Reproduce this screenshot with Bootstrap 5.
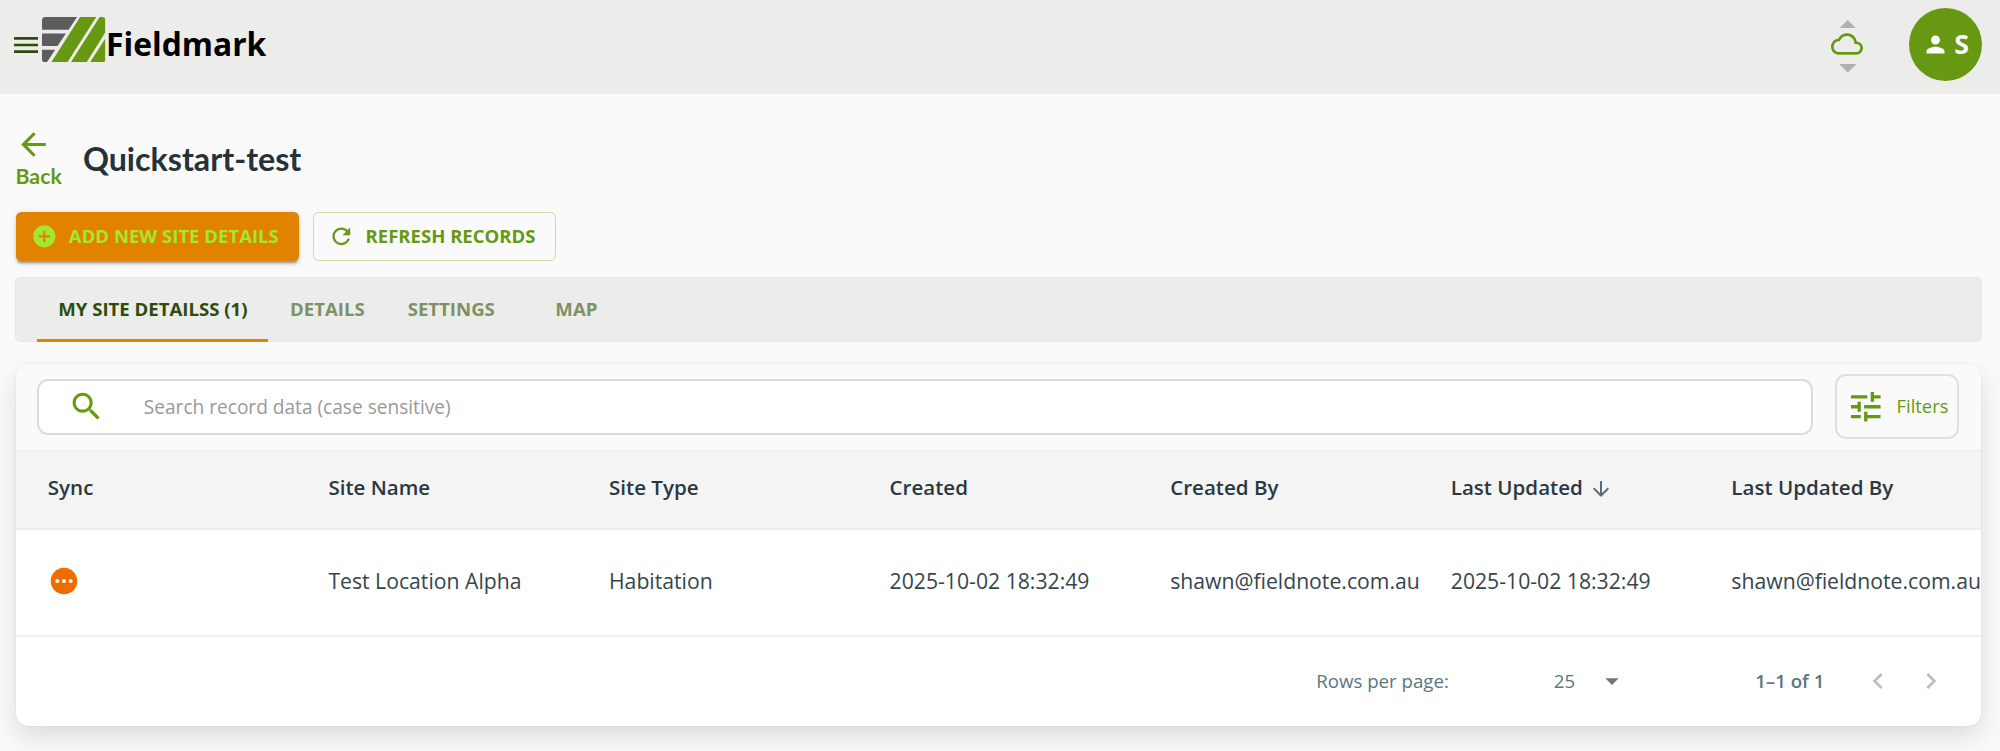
<!DOCTYPE html>
<html lang="en">
<head>
<meta charset="utf-8">
<meta name="viewport" content="width=device-width, initial-scale=1">
<title>Fieldmark</title>
<link rel="stylesheet" href="https://cdn.jsdelivr.net/npm/bootstrap@5.3.0/dist/css/bootstrap.min.css">
<style>
:root { --fm-green: #669911; --fm-dark: #2f4b0b; --fm-orange: #e18200; --fm-slate: #546e7a; }
body { font-family: "Open Sans", sans-serif; font-size: 21.2px; color: #263238; background: #fafafa; height: 751px; overflow: hidden; }
svg { display: block; flex: none; fill: currentColor; }
.topbar { height: 94px; background: #ececeb; padding: 0 18px 0 10px; }
.topbar-left { height: 89px; color: var(--fm-dark); }
.logo { margin: -10px 0 0 .3px; }
.brand-name { font-size: 31.8px; font-weight: 700; line-height: 44px; color: #000; margin: -2px 0 0 .3px; }
.sync-state { gap: 0; width: 32px; margin: 19.7px 45.6px 0 0; color: var(--fm-green); }
.sync-state .tri { color: #b0b0af; }
.avatar-btn { width: 73px; height: 73px; margin-top: 8px; background: var(--fm-green); color: #fff; gap: 5px; font-size: 26.67px; font-weight: 700; line-height: 1; border: 0; }
.title-bar { height: 118px; padding-left: 15.5px; }
.back-link { font: 700 21.33px/26px Lato, sans-serif; color: var(--fm-green); margin-top: 32px; }
.back-link svg { margin-left: -.5px; }
.page-title { font: 700 32.2px/40px Lato, sans-serif; margin: 44.5px 0 0 21px; }
.actions { padding-left: 15.6px; gap: 13.3px; }
.action-btn { height: 49px; font-size: 18.55px; font-weight: 700; line-height: 1; border-radius: 5.33px; white-space: nowrap; padding: 0; }
.btn-add { width: 283.7px; background: var(--fm-orange); color: #a5e633; gap: 10.8px; padding-left: 15.8px; box-shadow: 0 4px 1.5px -2.7px rgba(0,0,0,.2), 0 2.7px 2.7px rgba(0,0,0,.14), 0 1.3px 6.7px rgba(0,0,0,.12); border: 0; }
.btn-refresh { width: 243px; color: var(--fm-green); border: 1.33px solid #c9dcaa; gap: 11px; padding-left: 14.3px; }
.tabs-bar { height: 65px; margin: 16px 18px 0 15.3px; padding-left: 21px; background: #ececeb; border: 1px solid #e6e6e5; border-radius: 5.33px; }
.tab-item { padding: 0 21.5px 3px; font-size: 18.6px; font-weight: 700; color: #7d9164; border: 0; height: 63.5px; line-height: 61px; }
.tab-item.active { color: var(--fm-dark); border-bottom: 3px solid var(--fm-orange); padding-bottom: 0; width: 231.2px; text-align: center; padding-left: 0; padding-right: 0; }
.records { height: 362px; margin: 22px 19.2px 0 16.3px; border: 0; border-radius: 13px; background: #fff; overflow: hidden; box-shadow: 0 11px 27px rgba(0,0,0,.12), 0 0 1.5px rgba(0,0,0,.12); }
.records-tools { height: 86.5px; background: #fafafa; border-bottom: 1.5px solid #ececec; padding: 0 21.5px 0 21px; }
.search-box { height: 55.5px; border: 2px solid #dadcdc; border-radius: 11px; background: #fff; margin-right: 21.5px; padding-left: 28.5px; color: var(--fm-green); }
.search-box input { border: 0; font-size: 19.1px; line-height: 26px; padding: 0; margin: 0 0 0 39px; background: none; }
.search-box input::placeholder { color: #999; opacity: 1; }
.btn-filters { width: 124.5px; height: 65px; border: 2px solid #e0e0e0; border-radius: 11px; color: var(--fm-green); font-size: 18.4px; gap: 11.2px; padding: 0 0 1px 9px; line-height: 1; }
.grid-head { height: 79.5px; background: #f4f4f4; border-bottom: 2px solid #ededed; font-size: 20.55px; font-weight: 600; padding: 0 0 3px 16.5px; color: #2b383f; }
.grid-row { height: 107px; border-bottom: 2px solid #f0f0f0; padding: 0 0 3px 16.5px; color: #36454d; }
.grid-cell { flex: 0 0 280.6px; padding-left: 15px; white-space: nowrap; }
.grid-foot { height: 87px; font-size: 18.67px; color: #5a7683; }
</style>
</head>
<body>
<header class="topbar d-flex justify-content-between align-items-start">
  <div class="topbar-left d-flex align-items-center">
    <svg width="32" height="32" viewBox="0 0 24 24"><path d="M3 18h18v-2H3v2zm0-5h18v-2H3v2zm0-7v2h18V6H3z"/></svg>
    <svg class="logo" width="63.4" height="45.5" viewBox="127 51 188 135">
      <clipPath id="logoClip"><rect x="127" y="51" width="188" height="135" rx="10"/></clipPath>
      <g clip-path="url(#logoClip)">
        <path fill="#5f5c5d" d="M127 51h104l-25 38h-79zM127 100h71l-25 37h-46zM127 148h39l-25 38h-14z"/>
        <path fill="#669911" d="M240 51h48l-86 135h-48zM298 51h17v45l-56 90h-47zM315 115v71h-46z"/>
      </g>
    </svg>
    <span class="brand-name">Fieldmark</span>
  </div>
  <div class="d-flex align-items-start">
    <div class="sync-state d-flex flex-column align-items-center">
      <svg class="tri" width="17.4" height="8.7" viewBox="0 0 10 5"><path d="M0 5l5-5 5 5z"/></svg>
      <svg width="32" height="32" viewBox="0 0 24 24"><path d="M19.35 10.04C18.67 6.59 15.64 4 12 4 9.11 4 6.6 5.64 5.35 8.04 2.34 8.36 0 10.91 0 14c0 3.31 2.69 6 6 6h13c2.76 0 5-2.24 5-5 0-2.64-2.05-4.78-4.65-4.96zM19 18H6c-2.21 0-4-1.79-4-4 0-2.05 1.53-3.76 3.56-3.97l1.07-.11.5-.95C8.08 7.14 9.94 6 12 6c2.62 0 4.88 1.86 5.39 4.43l.3 1.5 1.53.11c1.56.1 2.78 1.41 2.78 2.96 0 1.65-1.35 3-3 3z"/></svg>
      <svg class="tri" width="17.4" height="8.7" viewBox="0 0 10 5" style="margin-top:3.2px"><path d="M0 0l5 5 5-5z"/></svg>
    </div>
    <button class="avatar-btn rounded-circle d-flex align-items-center justify-content-center p-0">
      <svg width="27" height="27" viewBox="0 0 24 24"><path d="M12 12c2.21 0 4-1.79 4-4s-1.79-4-4-4-4 1.79-4 4 1.79 4 4 4zm0 2c-2.67 0-8 1.34-8 4v2h16v-2c0-2.66-5.33-4-8-4z"/></svg>
      <span>S</span>
    </button>
  </div>
</header>

<main>
  <div class="title-bar d-flex align-items-start">
    <a class="back-link text-decoration-none" href="#">
      <svg width="37" height="37" viewBox="0 0 24 24"><path d="M20 11H7.83l5.59-5.59L12 4l-8 8 8 8 1.41-1.41L7.83 13H20v-2z"/></svg>
      Back
    </a>
    <h1 class="page-title">Quickstart-test</h1>
  </div>

  <div class="actions d-flex">
    <button class="btn action-btn btn-add d-flex align-items-center">
      <svg width="26.67" height="26.67" viewBox="0 0 24 24"><path d="M12 2C6.48 2 2 6.48 2 12s4.48 10 10 10 10-4.48 10-10S17.52 2 12 2zm5 11h-4v4h-2v-4H7v-2h4V7h2v4h4v2z"/></svg>
      <span>ADD NEW SITE DETAILS</span>
    </button>
    <button class="btn action-btn btn-refresh d-flex align-items-center">
      <svg width="26.67" height="26.67" viewBox="0 0 24 24"><path d="M17.65 6.35C16.2 4.9 14.21 4 12 4c-4.42 0-7.99 3.58-7.99 8s3.57 8 7.99 8c3.73 0 6.84-2.55 7.73-6h-2.08c-.82 2.33-3.04 4-5.65 4-3.31 0-6-2.69-6-6s2.69-6 6-6c1.66 0 3.14.69 4.22 1.78L13 11h7V4l-2.35 2.35z"/></svg>
      <span>REFRESH RECORDS</span>
    </button>
  </div>

  <nav class="tabs-bar nav flex-nowrap">
    <a class="nav-link tab-item active" href="#">MY SITE DETAILSS (1)</a>
    <a class="nav-link tab-item" href="#">DETAILS</a>
    <a class="nav-link tab-item" href="#">SETTINGS</a>
    <a class="nav-link tab-item" href="#" style="margin-left:17.5px">MAP</a>
  </nav>

  <section class="records card">
    <div class="records-tools d-flex align-items-center flex-shrink-0">
      <div class="search-box d-flex align-items-center flex-grow-1">
        <svg width="37" height="37" viewBox="0 0 24 24"><path d="M15.5 14h-.79l-.28-.27C15.41 12.59 16 11.11 16 9.5 16 5.91 13.09 3 9.5 3S3 5.91 3 9.5 5.91 16 9.5 16c1.61 0 3.09-.59 4.23-1.57l.27.28v.79l5 4.99L20.49 19l-4.99-5zm-6 0C7.01 14 5 11.99 5 9.5S7.01 5 9.5 5 14 7.01 14 9.5 11.99 14 9.5 14z"/></svg>
        <input class="flex-grow-1" type="text" placeholder="Search record data (case sensitive)">
      </div>
      <button class="btn btn-filters d-flex align-items-center">
        <svg width="39.5" height="39.5" viewBox="0 0 24 24"><path d="M3 17v2h6v-2H3zM3 5v2h10V5H3zm10 16v-2h8v-2h-8v-2h-2v6h2zM7 9v2H3v2h4v2h2V9H7zm14 4v-2H11v2h10zm-6-4h2V7h4V5h-4V3h-2v6z"/></svg>
        Filters
      </button>
    </div>

    <div class="grid-head d-flex align-items-center flex-shrink-0">
      <div class="grid-cell">Sync</div>
      <div class="grid-cell">Site Name</div>
      <div class="grid-cell">Site Type</div>
      <div class="grid-cell">Created</div>
      <div class="grid-cell">Created By</div>
      <div class="grid-cell d-flex align-items-center">Last Updated
        <svg width="24" height="24" viewBox="0 0 24 24" style="margin-left:6.3px;margin-top:1.5px;color:#546e7a"><path d="m20 12-1.41-1.41L13 16.17V4h-2v12.17l-5.58-5.59L4 12l8 8 8-8z"/></svg>
      </div>
      <div class="grid-cell">Last Updated By</div>
    </div>

    <div class="grid-row d-flex align-items-center flex-shrink-0">
      <div class="grid-cell"><svg width="32" height="32" viewBox="0 0 24 24" style="color:#ef6c00"><path d="M12 2C6.48 2 2 6.48 2 12s4.48 10 10 10 10-4.48 10-10S17.52 2 12 2zM7 13.5c-.83 0-1.5-.67-1.5-1.5s.67-1.5 1.5-1.5 1.5.67 1.5 1.5-.67 1.5-1.5 1.5zm5 0c-.83 0-1.5-.67-1.5-1.5s.67-1.5 1.5-1.5 1.5.67 1.5 1.5-.67 1.5-1.5 1.5zm5 0c-.83 0-1.5-.67-1.5-1.5s.67-1.5 1.5-1.5 1.5.67 1.5 1.5-.67 1.5-1.5 1.5z"/></svg></div>
      <div class="grid-cell">Test Location Alpha</div>
      <div class="grid-cell">Habitation</div>
      <div class="grid-cell">2025-10-02 18:32:49</div>
      <div class="grid-cell">shawn@fieldnote.com.au</div>
      <div class="grid-cell">2025-10-02 18:32:49</div>
      <div class="grid-cell">shawn@fieldnote.com.au</div>
    </div>

    <div class="grid-foot d-flex align-items-center justify-content-end flex-shrink-0">
      <span style="margin-right:105px">Rows per page:</span>
      <span style="margin-right:21px">25</span>
      <svg width="32" height="32" viewBox="0 0 24 24" style="color:#757575;margin-right:127px"><path d="m7 10 5 5 5-5z"/></svg>
      <span style="margin-right:37.5px;font-weight:600">1–1 of 1</span>
      <svg width="32" height="32" viewBox="0 0 24 24" style="color:#bdbdbd;margin-right:20.7px"><path d="M15.41 16.59 10.83 12l4.58-4.59L14 6l-6 6 6 6z"/></svg>
      <svg width="32" height="32" viewBox="0 0 24 24" style="color:#bdbdbd;margin-right:34.3px"><path d="M8.59 16.59 13.17 12 8.59 7.41 10 6l6 6-6 6z"/></svg>
    </div>
  </section>
</main>
<script src="https://cdn.jsdelivr.net/npm/bootstrap@5.3.0/dist/js/bootstrap.bundle.min.js"></script>
</body>
</html>
